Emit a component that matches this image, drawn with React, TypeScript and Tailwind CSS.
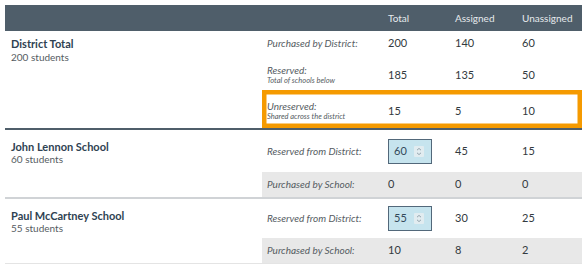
import React from 'react';

const cols = 'grid grid-cols-[126px_67px_67px_1fr] items-center';

function Spinner() {
  return (
    <svg width="10" height="11" viewBox="0 0 10 11" className="shrink-0">
      <rect x="0" y="0" width="10" height="11" rx="1" fill="#e1ecf0" />
      <path d="M3 4.2 L5 2.4 L7 4.2" fill="none" stroke="#8a9aa4" strokeWidth="0.9" />
      <path d="M3 6.8 L5 8.6 L7 6.8" fill="none" stroke="#8a9aa4" strokeWidth="0.9" />
    </svg>
  );
}

function NumberInput({ value }: { value: number }) {
  return (
    <div className="flex h-[25px] w-[44px] items-center justify-between border border-[#52687a] bg-[#c6e4ee] pl-[5px] pr-[7px] text-[11px] text-[#34495a]">
      <span>{value}</span>
      <Spinner />
    </div>
  );
}

function Label({ text }: { text: string }) {
  return <span className="pl-[5px] text-[10px] italic text-[#555c62]">{text}</span>;
}

interface School {
  name: string;
  students: number;
  reserved: number;
  reservedAssigned: number;
  reservedUnassigned: number;
  purchased: [number, number, number];
  rowHeight: string;
}

const schools: School[] = [
  { name: 'John Lennon School', students: 60, reserved: 60, reservedAssigned: 45, reservedUnassigned: 15, purchased: [0, 0, 0], rowHeight: 'h-[42px]' },
  { name: 'Paul McCartney School', students: 55, reserved: 55, reservedAssigned: 30, reservedUnassigned: 25, purchased: [10, 8, 2], rowHeight: 'h-[39px]' },
];

export default function App() {
  return (
    <div className="min-h-screen bg-white p-[5px] font-['Lato','Liberation_Sans',sans-serif] text-[11px] text-[#333a40]">
      <div className="w-[577px]">
        {/* header */}
        <div className="flex h-[26px] items-center bg-[#4f5e6a] text-[10px] text-[#e6eaed]">
          <div className="w-[257px]" />
          <div className={`${cols} flex-1`}>
            <span />
            <span>Total</span>
            <span>Assigned</span>
            <span>Unassigned</span>
          </div>
        </div>

        {/* district */}
        <div className="flex">
          <div className="w-[257px] pl-[6px] pt-[6px]">
            <div className="text-[11px] font-bold leading-[14px] text-[#2f4252]">District Total</div>
            <div className="text-[10px] leading-[12px] text-[#555c62]">200 students</div>
          </div>
          <div className="flex flex-1 flex-col">
            <div className={`${cols} h-[25px]`}>
              <Label text="Purchased by District:" />
              <span>200</span>
              <span>140</span>
              <span>60</span>
            </div>
            <div className={`${cols} h-[34px] pt-[4px]`}>
              <div className="flex flex-col pl-[5px] italic text-[#555c62]">
                <span className="text-[10px] leading-[12px]">Reserved:</span>
                <span className="text-[7.5px] leading-[10px]">Total of schools below</span>
              </div>
              <span>185</span>
              <span>135</span>
              <span>50</span>
            </div>
            <div className={`${cols} h-[38px] pt-[4px] ring-[4.5px] ring-inset ring-[#f59a00]`}>
              <div className="flex flex-col pl-[5px] italic text-[#555c62]">
                <span className="text-[10px] leading-[12px]">Unreserved:</span>
                <span className="text-[7.5px] leading-[10px]">Shared across the district</span>
              </div>
              <span>15</span>
              <span>5</span>
              <span>10</span>
            </div>
          </div>
        </div>
        <div className="h-[2px] bg-[#4f5e6a]" />

        {/* schools */}
        {schools.map((s, i) => (
          <div key={s.name}>
            <div className="flex">
              <div className="w-[257px] pl-[6px] pt-[10px]">
                <div className="text-[11px] font-bold leading-[13px] text-[#2f4252]">{s.name}</div>
                <div className="text-[10px] leading-[12px] text-[#555c62]">{s.students} students</div>
              </div>
              <div className="flex flex-1 flex-col">
                <div className={`${cols} ${s.rowHeight}`}>
                  <Label text="Reserved from District:" />
                  <NumberInput value={s.reserved} />
                  <span>{s.reservedAssigned}</span>
                  <span>{s.reservedUnassigned}</span>
                </div>
                <div className={`${cols} h-[25px] bg-[#e8e8e8]`}>
                  <Label text="Purchased by School:" />
                  <span>{s.purchased[0]}</span>
                  <span>{s.purchased[1]}</span>
                  <span>{s.purchased[2]}</span>
                </div>
              </div>
            </div>
            <div className={i === 0 ? 'h-[2px] bg-[#d0d3d6]' : 'h-[1px] bg-[#e4e4e4]'} />
          </div>
        ))}
      </div>
    </div>
  );
}
